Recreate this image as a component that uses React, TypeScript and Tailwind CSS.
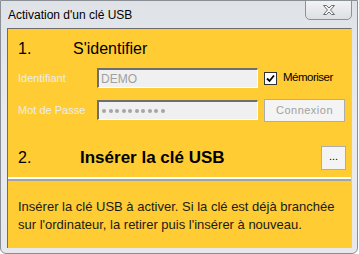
import React from "react";

const font = { fontFamily: '"Liberation Sans", Arial, sans-serif' };

export default function App() {
  return (
    <div className="w-[359px] h-[254px] overflow-hidden bg-white" style={font}>
      <div className="relative w-[358px] h-[254px] rounded-b-[6px] border border-[#8a8f96] bg-gradient-to-b from-[#dfe3e8] via-[#e9ebee] to-[#e6e8eb] flex flex-col">
        {/* title bar */}
        <div className="h-[27px] flex items-center pl-[7px] text-[12px] text-black">
          Activation d'un clé USB
        </div>
        <button className="absolute top-[-1px] right-[5px] w-[47px] h-[20px] rounded-b-[5px] border border-[#8d9198] bg-gradient-to-b from-[#f2f3f5] to-[#dcdfe3] flex items-center justify-center">
          <svg width="16" height="12" viewBox="0 0 16 12">
            <path
              d="M2.5 1.5 L5.5 1.5 L8 4 L10.5 1.5 L13.5 1.5 L9.5 6 L13.5 10.5 L10.5 10.5 L8 8 L5.5 10.5 L2.5 10.5 L6.5 6 Z"
              fill="#f4f4f4"
              stroke="#6a6e74"
              strokeWidth="1"
            />
          </svg>
        </button>

        {/* client area */}
        <div className="mx-[6px] w-[345px] h-[220px] border-l border-t border-[#6d6d6d] border-r border-r-[#c9ccd0] bg-[#ffcc33] flex flex-col">
          <div className="h-[148px] flex flex-col pl-[10px] pr-[5px]">
            <div className="h-[34px] flex items-end pb-[2px] text-[16px] text-black">
              <span className="w-[55px]">1.</span>
              <span>S'identifier</span>
            </div>
            <div className="mt-[5px] flex items-center h-[20px]">
              <span className="w-[79px] text-[11px] text-[#ececec]">Identifiant</span>
              <div className="w-[161px] h-[20px] bg-[#f0f0f0] border-t-2 border-l-2 border-[#6e6e6e] border-b border-r border-b-white border-r-white flex items-center pl-[2px] text-[12px] text-[#a0a0a0]">
                DEMO
              </div>
              <div className="ml-[6px] w-[13px] h-[13px] bg-white border border-[#333] flex items-center justify-center">
                <svg width="9" height="9" viewBox="0 0 9 9">
                  <path d="M1 4.5 L3.5 7 L8 1.5" fill="none" stroke="#000" strokeWidth="1.8" />
                </svg>
              </div>
              <span className="ml-[6px] text-[11.5px] tracking-[-0.5px] text-black">Mémoriser</span>
            </div>
            <div className="mt-[12px] flex items-center h-[20px]">
              <span className="w-[79px] text-[11px] text-[#ececec]">Mot de Passe</span>
              <div className="w-[161px] h-[20px] bg-[#f0f0f0] border-t-2 border-l-2 border-[#6e6e6e] border-b border-r border-b-white border-r-white flex items-center pl-[3px] gap-[2.5px]">
                {Array.from({ length: 10 }).map((_, i) => (
                  <span key={i} className="w-[4px] h-[4px] rounded-full bg-[#a6a6a6]" />
                ))}
              </div>
              <button className="ml-[6px] w-[81px] h-[23px] bg-[#f4f4f4] border border-[#adadad] text-[11px] text-[#a0a0a0] tracking-[0.5px]">
                Connexion
              </button>
            </div>
            <div className="mt-[26px] flex items-center h-[24px] text-black">
              <span className="w-[62px] text-[16px]">2.</span>
              <span className="font-bold text-[17px]">Insérer la clé USB</span>
              <button className="ml-auto w-[25px] h-[24px] bg-[#f4f4f4] border border-[#adadad] text-[11px] text-black leading-none pb-[3px]">
                ...
              </button>
            </div>
          </div>
          <div className="h-[2px] bg-white" />
          <div className="h-[2px] bg-[#a3a3a3]" />
          <div className="pl-[10px] pt-[17px] text-[13px] leading-[18px] text-[#1a1a1a] whitespace-nowrap">
            Insérer la clé USB à activer. Si la clé est déjà branchée
            <br />
            sur l'ordinateur, la retirer puis l'insérer à nouveau.
          </div>
        </div>
      </div>
    </div>
  );
}
